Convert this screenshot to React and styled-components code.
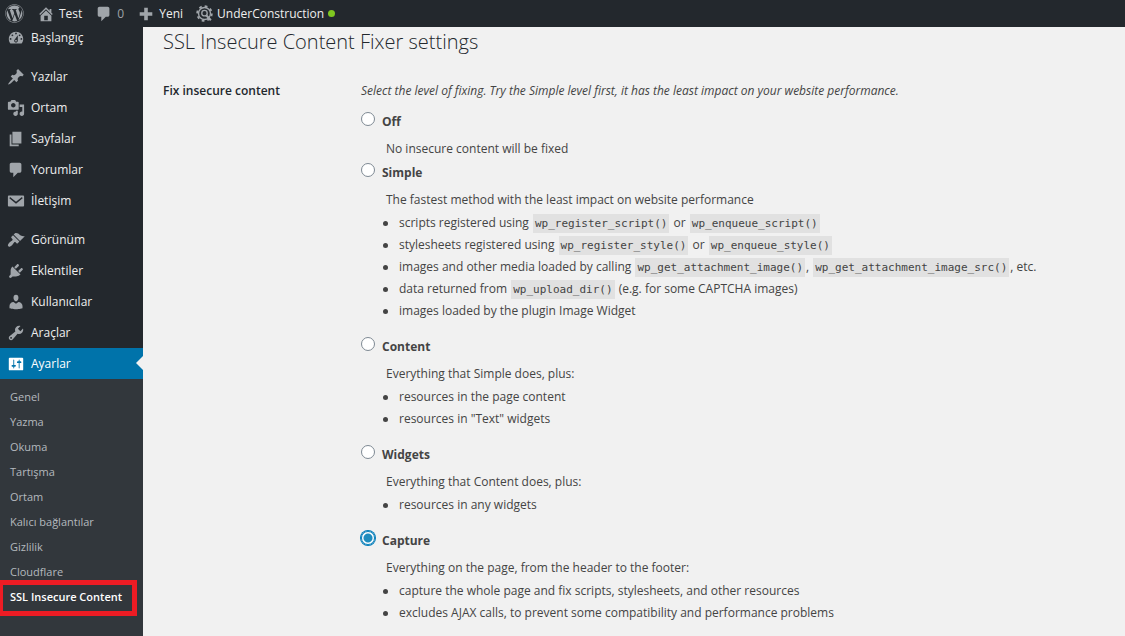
import React from 'react';
import styled, { createGlobalStyle, css } from 'styled-components';
import { FaWordpress } from 'react-icons/fa';

const GlobalStyle = createGlobalStyle`
  *, *::before, *::after { box-sizing: border-box; }
  body {
    margin: 0;
    background: #f1f1f1;
    color: #444;
    font: 12px/24px "Open Sans", "Noto Sans", sans-serif;
  }
  a { color: inherit; text-decoration: none; }
`;

const Page = styled.div`
  display: flex;
  flex-direction: column;
  min-height: 100vh;
  overflow: hidden;
`;

const AdminBar = styled.header`
  position: relative;
  z-index: 2;
  display: flex;
  align-items: center;
  height: 27px;
  padding: 0 5px;
  gap: 13px;
  background: #23282d;
  color: #eee;
`;

const BarLink = styled.a`
  display: flex;
  align-items: center;
  gap: 4px;
  color: ${(p) => (p.$muted ? '#9ea3a8' : '#eee')};
`;

const StatusDot = styled.span`
  width: 7px;
  height: 7px;
  border-radius: 50%;
  background: #7fc720;
`;

const Icon = styled.svg`
  flex: none;
  width: ${(p) => p.$size || 18}px;
  height: ${(p) => p.$size || 18}px;
  fill: ${(p) => (p.$bright ? '#fff' : '#a0a5aa')};
  fill-rule: evenodd;
`;

const WordPressIcon = styled(FaWordpress)`
  width: 19px;
  height: 19px;
  color: #a0a5aa;
`;

const Body = styled.div`
  display: flex;
  flex: 1;
`;

const Sidebar = styled.nav`
  display: flex;
  flex-direction: column;
  flex: none;
  width: 143px;
  margin-top: -5px;
  background: #23282d;
`;

const MenuLink = styled.a`
  position: relative;
  display: flex;
  align-items: center;
  gap: 6px;
  height: 31px;
  padding-left: 7px;
  margin-top: ${(p) => (p.$spaced ? 8 : 0)}px;
  color: #eee;
  ${(p) =>
    p.$active &&
    css`
      background: #0073aa;
      color: #fff;
      &::after {
        content: '';
        position: absolute;
        right: 0;
        top: 8px;
        border: 7px solid transparent;
        border-left-width: 0;
        border-right-color: #f1f1f1;
      }
    `}
`;

const SubMenu = styled.div`
  flex: 1;
  padding: 5px 0;
  background: #32373c;
`;

const SubLink = styled.a`
  position: relative;
  display: block;
  padding-left: 10px;
  font-size: 11px;
  line-height: 25px;
  color: #b4b9be;
  ${(p) =>
    p.$current &&
    css`
      color: #fff;
      font-weight: 600;
      &::after {
        content: '';
        position: absolute;
        inset: -4px 6px -7px -2px;
        border: 5px solid #ed1c24;
      }
    `}
`;

const Main = styled.main`
  flex: 1;
  min-width: 0;
  padding: 0 20px;
`;

const Title = styled.h1`
  margin: 0;
  font-size: 20px;
  font-weight: 300;
  line-height: 30px;
  color: #23282d;
`;

const Setting = styled.div`
  display: flex;
  padding-top: 22px;
`;

const SettingName = styled.h2`
  flex: none;
  width: 198px;
  margin: 0;
  font-size: 12px;
  font-weight: 600;
  line-height: 24px;
  color: #23282d;
`;

const Levels = styled.div`
  flex: 1;
  min-width: 0;
`;

const Hint = styled.p`
  margin: 0 0 7px;
  font-style: italic;
`;

const LevelLabel = styled.label`
  display: flex;
  align-items: center;
  gap: 7px;
  height: 24px;
  margin-bottom: 3px;
  font-weight: 700;
`;

const Radio = styled.input`
  appearance: none;
  flex: none;
  width: 14px;
  height: 14px;
  margin: 0 0 6px;
  border: 1px solid #7e8993;
  border-radius: 50%;
  background: #fff;
  &:checked {
    border-color: #007cba;
    box-shadow: 0 0 0 1px #007cba;
    background: radial-gradient(circle, #1e8cbe 4px, #fff 5px);
  }
`;

const Description = styled.p`
  margin: 0 0 0 25px;
`;

const Points = styled.ul`
  margin: 0 0 13px 22px;
  padding: 0;
  list-style: none;
`;

const Point = styled.li`
  display: flex;
  align-items: center;
  line-height: 22px;
  &::before {
    content: '';
    flex: none;
    width: 5px;
    height: 5px;
    margin-right: 11px;
    border-radius: 50%;
    background: #444;
  }
`;

const Code = styled.code`
  margin: 0 1px;
  padding: 3px 2px;
  background: #e1e1e1;
  font: 11px/13px "DejaVu Sans Mono", monospace;
`;

const paths = {
  home: 'M16 8.5l1.53 1.53-1.06 1.06L10 4.6l-6.47 6.49-1.06-1.06L10 2.5l4 4v-2h2v4zm-6-2.46l6 5.99V18H4v-5.97zM12 17v-5H8v5h4z',
  comments: 'M5 2h9c1.1 0 2 .9 2 2v7c0 1.1-.9 2-2 2h-2l-5 5v-5H5c-1.1 0-2-.9-2-2V4c0-1.1.9-2 2-2z',
  plus: 'M8 3h4v5h5v4h-5v5H8v-5H3V8h5z',
  dashboard:
    'M3.76 16h12.48c1.1-1.37 1.76-3.11 1.76-5 0-4.42-3.58-8-8-8s-8 3.58-8 8c0 1.89.66 3.63 1.76 5zM10 4c.55 0 1 .45 1 1s-.45 1-1 1-1-.45-1-1 .45-1 1-1zM6 6c.55 0 1 .45 1 1s-.45 1-1 1-1-.45-1-1 .45-1 1-1zm8 0c.55 0 1 .45 1 1s-.45 1-1 1-1-.45-1-1 .45-1 1-1zm-5.37 5.55L12 7v6c0 1.1-.9 2-2 2s-2-.9-2-2c0-.57.24-1.08.63-1.45zM4 10c.55 0 1 .45 1 1s-.45 1-1 1-1-.45-1-1 .45-1 1-1zm12 0c.55 0 1 .45 1 1s-.45 1-1 1-1-.45-1-1 .45-1 1-1zm-5 3c0-.55-.45-1-1-1s-1 .45-1 1 .45 1 1 1 1-.45 1-1z',
  post: 'M10.44 3.02l1.82-1.82 6.36 6.35-1.83 1.82c-1.05-.68-2.48-.57-3.41.36l-.75.75c-.92.93-1.04 2.35-.35 3.41l-1.83 1.82-2.41-2.41-2.8 2.79c-.42.42-3.38 2.71-3.8 2.29s1.86-3.39 2.28-3.81l2.79-2.79L4.1 9.36l1.83-1.82c1.05.69 2.48.57 3.4-.36l.75-.75c.93-.92 1.05-2.35.36-3.41z',
  media:
    'M13 11V4c0-.55-.45-1-1-1h-1.67L9 1H5L3.67 3H2c-.55 0-1 .45-1 1v7c0 .55.45 1 1 1h10c.55 0 1-.45 1-1zM7 4.5c1.38 0 2.5 1.12 2.5 2.5S8.38 9.5 7 9.5 4.5 8.38 4.5 7 5.62 4.5 7 4.5zM14 6h5v10.5c0 1.38-1.12 2.5-2.5 2.5S14 17.88 14 16.5s1.12-2.5 2.5-2.5c.17 0 .34.02.5.05V9h-3V6zm-4 8.05V13h2v3.5c0 1.38-1.12 2.5-2.5 2.5S7 17.88 7 16.5 8.12 14 9.5 14c.17 0 .34.02.5.05z',
  page: 'M6 15V2h10v13H6zm-1 1h8v2H3V5h2v11z',
  email: 'M2 4h16q1 0 1 1v10q0 1-1 1H2q-1 0-1-1V5q0-1 1-1zM3.4 5.6L2.6 7l7.4 6 7.4-6-.8-1.4L10 10.8z',
  appearance:
    'M14.48 11.06L7.41 3.99l1.5-1.5c.5-.56 2.3-.47 3.51.32 1.21.8 1.43 1.28 2.91 2.1 1.18.64 2.45 1.26 4.45.85zm-.71.71L6.7 4.7 4.93 6.47c-.39.39-.39 1.02 0 1.41l1.06 1.06c.39.39.39 1.03 0 1.42-.6.6-1.43 1.11-2.21 1.69-.35.26-.7.53-1.01.84C1.43 14.23.4 16.08 1.4 17.07c.99 1 2.84-.03 4.18-1.36.31-.31.58-.66.85-1.02.57-.78 1.08-1.61 1.69-2.21.39-.39 1.02-.39 1.41 0l1.06 1.06c.39.39 1.02.39 1.41 0z',
  plugins:
    'M13.11 4.36L9.87 7.6 8 5.73l3.24-3.24c.35-.34 1.05-.2 1.56.32.52.51.66 1.21.31 1.55zm-8 1.77l.91-1.12 9.01 9.01-1.19.84c-.71.71-2.63 1.16-3.82 1.16H6.14L4.9 17.26c-.59.59-1.54.59-2.12 0-.59-.58-.59-1.53 0-2.12l1.24-1.24v-3.88c0-1.13.4-3.19 1.09-3.89zm7.26 3.97l3.24-3.24c.34-.35 1.04-.21 1.55.31.52.51.66 1.21.31 1.55l-3.24 3.25z',
  users:
    'M10 9.25c-2.27 0-2.73-3.44-2.73-3.44C7 4.02 7.82 2 9.97 2c2.16 0 2.98 2.02 2.71 3.81 0 0-.41 3.44-2.68 3.44zm0 2.57L12.72 10c2.39 0 4.52 2.33 4.52 4.53v2.49s-3.65 1.13-7.24 1.13c-3.65 0-7.24-1.13-7.24-1.13v-2.49c0-2.25 1.94-4.48 4.47-4.48z',
  tools:
    'M16.68 9.77c-1.34 1.34-3.3 1.67-4.95.99l-5.41 6.52c-.99.99-2.59.99-3.58 0s-.99-2.59 0-3.57l6.52-5.42c-.68-1.65-.35-3.61.99-4.95 1.28-1.28 3.12-1.62 4.72-1.06l-2.89 2.89 2.82 2.82 2.86-2.87c.53 1.58.18 3.39-1.08 4.65zM3.81 16.21c.4.39 1.04.39 1.43 0 .4-.4.4-1.04 0-1.43-.39-.4-1.03-.4-1.43 0-.39.39-.39 1.03 0 1.43z',
  settings:
    'M18 16V4c0-.55-.45-1-1-1H3c-.55 0-1 .45-1 1v12c0 .55.45 1 1 1h14c.55 0 1-.45 1-1zM8 11h1c.55 0 1 .45 1 1s-.45 1-1 1H8v1.5c0 .28-.22.5-.5.5s-.5-.22-.5-.5V13H6c-.55 0-1-.45-1-1s.45-1 1-1h1V5.5c0-.28.22-.5.5-.5s.5.22.5.5V11zm5-2h-1c-.55 0-1-.45-1-1s.45-1 1-1h1V5.5c0-.28.22-.5.5-.5s.5.22.5.5V7h1c.55 0 1 .45 1 1s-.45 1-1 1h-1v5.5c0 .28-.22.5-.5.5s-.5-.22-.5-.5V9z',
};

function Glyph({ name, size, bright }) {
  return (
    <Icon viewBox="0 0 20 20" $size={size} $bright={bright} aria-hidden="true">
      <path d={paths[name]} />
    </Icon>
  );
}

function GearIcon() {
  return (
    <Icon viewBox="0 0 20 20" $size={17} aria-hidden="true">
      <g fill="none" stroke="#a0a5aa">
        <circle cx="10" cy="10" r="7" strokeWidth="1.6" />
        <circle cx="10" cy="10" r="8.6" strokeWidth="2.2" strokeDasharray="3.2 3.554" />
        <circle cx="10" cy="9.6" r="3.2" strokeWidth="1.6" />
        <path d="M12 12l5.5 6" strokeWidth="2.4" />
      </g>
    </Icon>
  );
}

const menu = [
  { icon: 'dashboard', label: 'Başlangıç' },
  { icon: 'post', label: 'Yazılar', spaced: true },
  { icon: 'media', label: 'Ortam' },
  { icon: 'page', label: 'Sayfalar' },
  { icon: 'comments', label: 'Yorumlar' },
  { icon: 'email', label: 'İletişim' },
  { icon: 'appearance', label: 'Görünüm', spaced: true },
  { icon: 'plugins', label: 'Eklentiler' },
  { icon: 'users', label: 'Kullanıcılar' },
  { icon: 'tools', label: 'Araçlar' },
  { icon: 'settings', label: 'Ayarlar', active: true },
];

const subMenu = [
  'Genel',
  'Yazma',
  'Okuma',
  'Tartışma',
  'Ortam',
  'Kalıcı bağlantılar',
  'Gizlilik',
  'Cloudflare',
  'SSL Insecure Content',
];

const levels = [
  { id: 'off', name: 'Off', text: 'No insecure content will be fixed' },
  {
    id: 'simple',
    name: 'Simple',
    text: 'The fastest method with the least impact on website performance',
    points: [
      <>scripts registered using <Code>wp_register_script()</Code> or <Code>wp_enqueue_script()</Code></>,
      <>stylesheets registered using <Code>wp_register_style()</Code> or <Code>wp_enqueue_style()</Code></>,
      <>images and other media loaded by calling <Code>wp_get_attachment_image()</Code>, <Code>wp_get_attachment_image_src()</Code>, etc.</>,
      <>data returned from <Code>wp_upload_dir()</Code> (e.g. for some CAPTCHA images)</>,
      'images loaded by the plugin Image Widget',
    ],
  },
  {
    id: 'content',
    name: 'Content',
    text: 'Everything that Simple does, plus:',
    points: ['resources in the page content', 'resources in "Text" widgets'],
  },
  {
    id: 'widgets',
    name: 'Widgets',
    text: 'Everything that Content does, plus:',
    points: ['resources in any widgets'],
  },
  {
    id: 'capture',
    name: 'Capture',
    text: 'Everything on the page, from the header to the footer:',
    points: [
      'capture the whole page and fix scripts, stylesheets, and other resources',
      'excludes AJAX calls, to prevent some compatibility and performance problems',
    ],
  },
];

export default function App() {
  return (
    <Page>
      <GlobalStyle />
      <AdminBar>
        <BarLink href="#" aria-label="WordPress"><WordPressIcon /></BarLink>
        <BarLink href="#"><Glyph name="home" /> Test</BarLink>
        <BarLink href="#" $muted><Glyph name="comments" /> 0</BarLink>
        <BarLink href="#"><Glyph name="plus" /> Yeni</BarLink>
        <BarLink href="#"><GearIcon /> UnderConstruction <StatusDot /></BarLink>
      </AdminBar>
      <Body>
        <Sidebar>
          {menu.map((m) => (
            <MenuLink href="#" key={m.label} $spaced={m.spaced} $active={m.active}>
              <Glyph name={m.icon} bright={m.active} />
              {m.label}
            </MenuLink>
          ))}
          <SubMenu>
            {subMenu.map((s, i) => (
              <SubLink href="#" key={s} $current={i === subMenu.length - 1}>{s}</SubLink>
            ))}
          </SubMenu>
        </Sidebar>
        <Main>
          <Title>SSL Insecure Content Fixer settings</Title>
          <Setting role="radiogroup" aria-labelledby="fix-level">
            <SettingName id="fix-level">Fix insecure content</SettingName>
            <Levels>
              <Hint>
                Select the level of fixing. Try the Simple level first, it has the least impact on your website
                performance.
              </Hint>
              {levels.map((l) => (
                <React.Fragment key={l.id}>
                  <LevelLabel htmlFor={l.id}>
                    <Radio type="radio" name="level" id={l.id} defaultChecked={l.id === 'capture'} />
                    {l.name}
                  </LevelLabel>
                  <Description>{l.text}</Description>
                  {l.points && (
                    <Points>
                      {l.points.map((p, i) => (
                        <Point key={i}><span>{p}</span></Point>
                      ))}
                    </Points>
                  )}
                </React.Fragment>
              ))}
            </Levels>
          </Setting>
        </Main>
      </Body>
    </Page>
  );
}
